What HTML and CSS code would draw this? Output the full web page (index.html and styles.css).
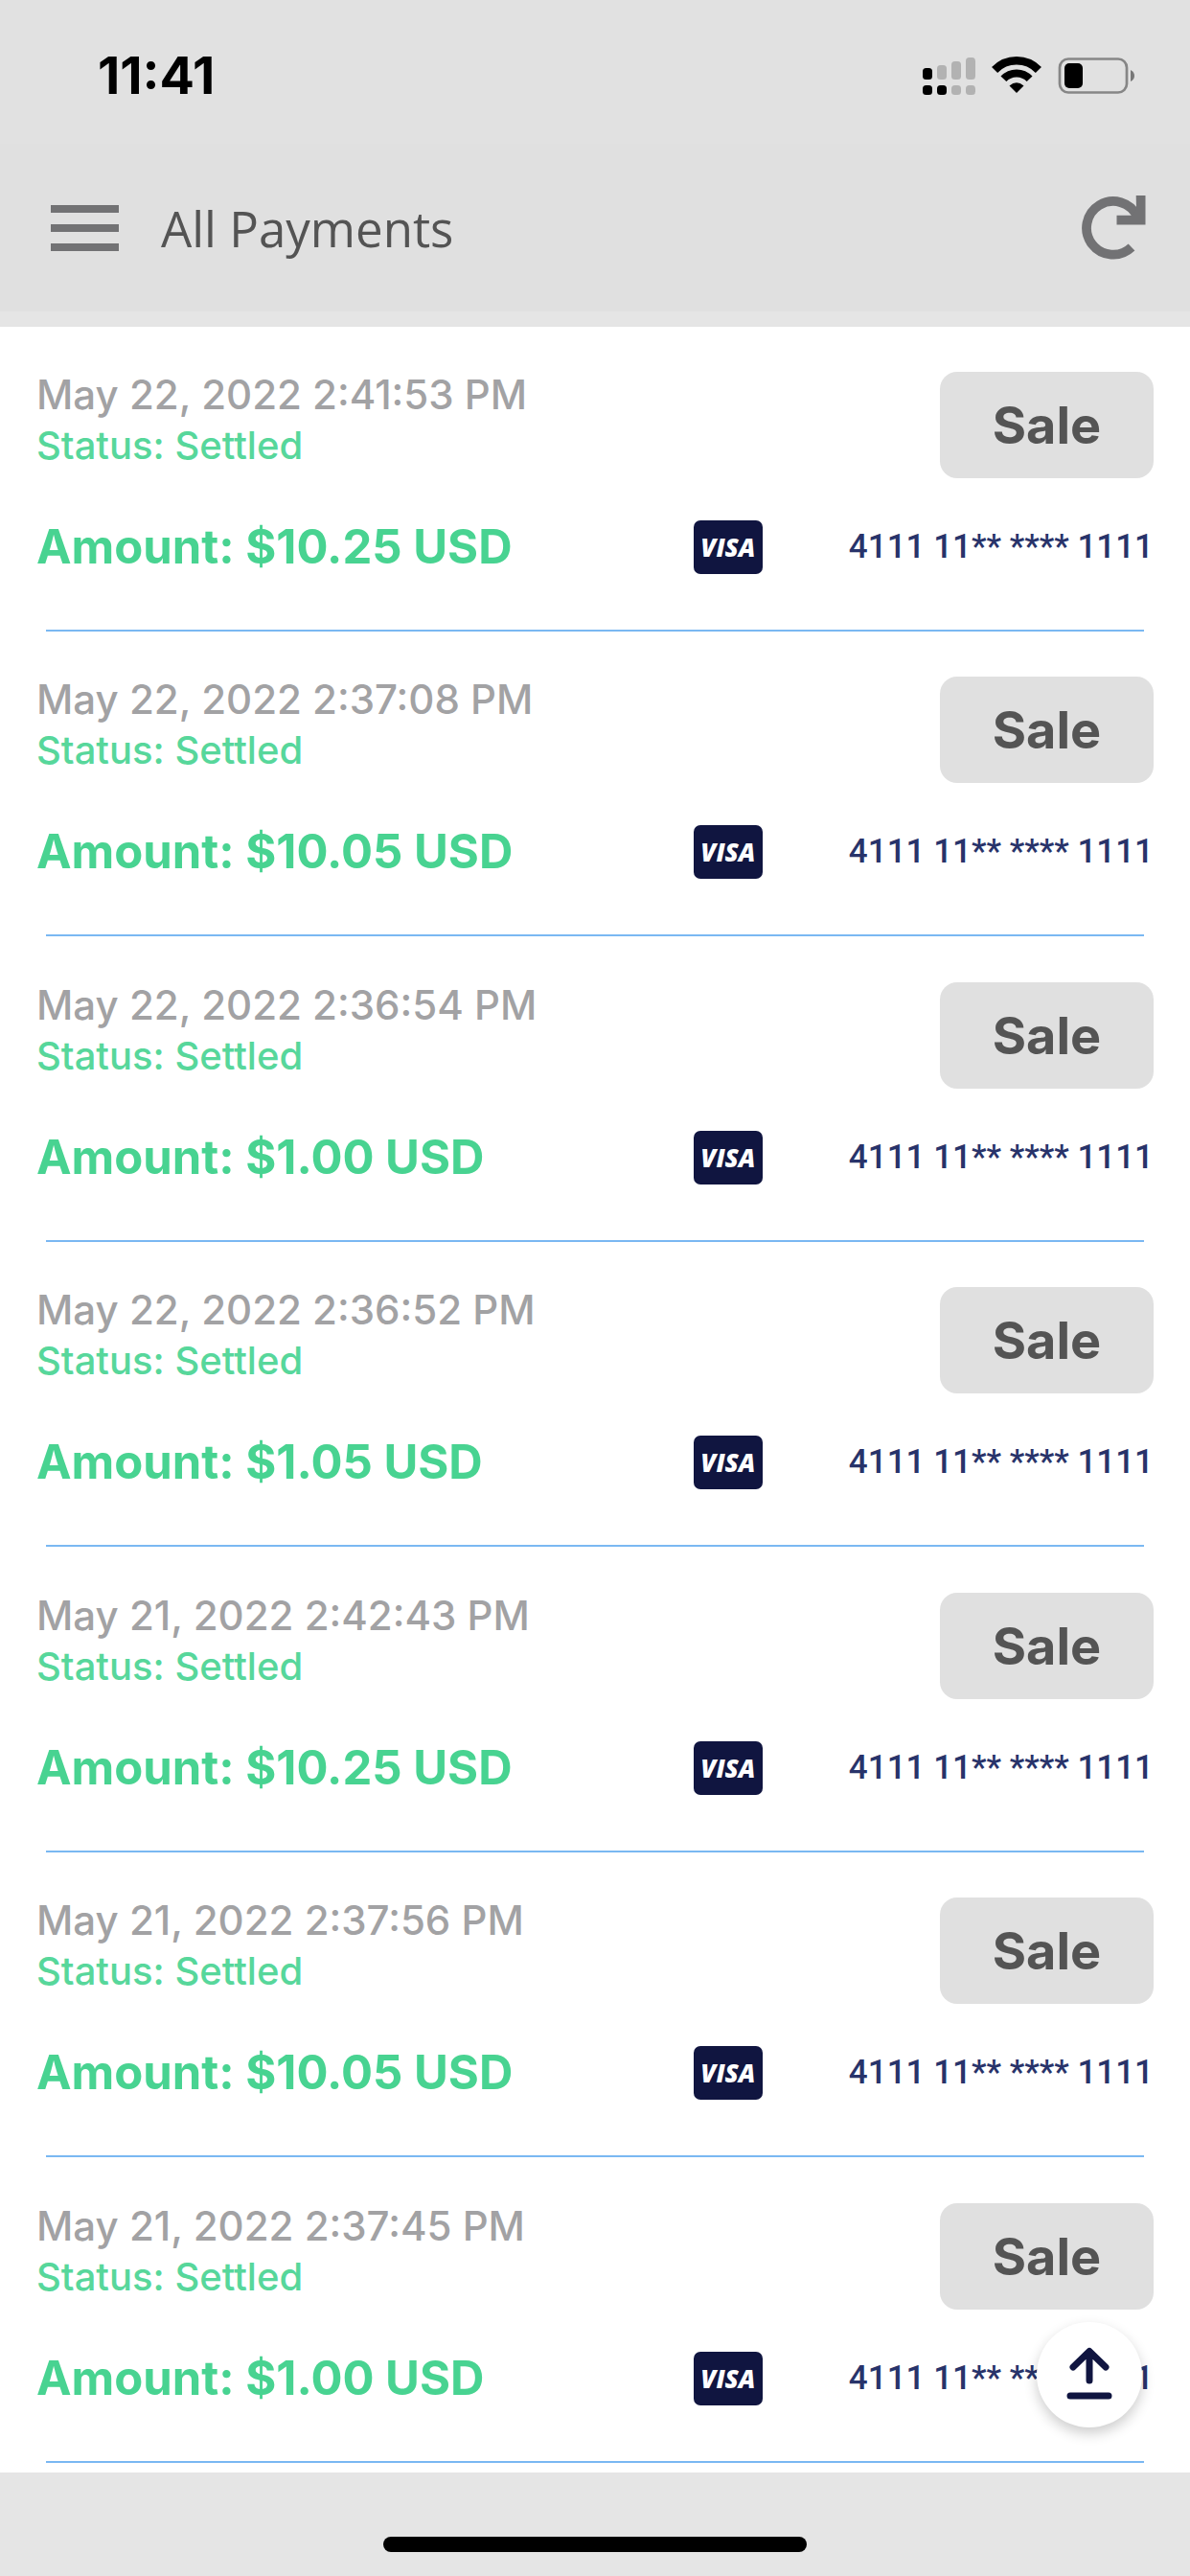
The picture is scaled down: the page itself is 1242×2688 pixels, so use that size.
FILE: index.html
```html
<!DOCTYPE html>
<html lang="en">
<head>
<meta charset="utf-8">
<meta name="viewport" content="width=device-width, initial-scale=1">
<title>All Payments</title>
<link rel="stylesheet" href="styles.css">
</head>
<body>
<div class="status-bar">
  <span class="clock">11:41</span>
  <svg class="status-icons" viewBox="0 0 224 42" width="224" height="42" aria-hidden="true">
    <g fill="#b2b2b2">
      <rect x="16" y="10" width="10" height="15" rx="3.5"/>
      <rect x="31" y="6" width="10" height="19" rx="3.5"/>
      <rect x="46" y="2" width="10" height="23" rx="3.5"/>
      <rect x="31" y="31" width="10" height="10" rx="3.5"/>
      <rect x="46" y="31" width="10" height="10" rx="3.5"/>
    </g>
    <rect x="1" y="13" width="10" height="12" rx="3.5"/>
    <rect x="1" y="31" width="10" height="10" rx="3.5"/>
    <rect x="16" y="31" width="10" height="10" rx="3.5"/>
    <g fill="none" stroke="#000">
      <path stroke-width="8.5" d="M76.1 15A31.8 31.8 0 0 1 121.9 15"/>
      <path stroke-width="8" d="M85.4 24.3A18.6 18.6 0 0 1 112.6 24.3"/>
    </g>
    <path d="M91.5 31.5Q99 25 106.5 31.5L99 39Z"/>
    <rect x="144" y="3.5" width="70" height="35" rx="9" fill="none" stroke="#868686" stroke-width="2.7"/>
    <rect x="149" y="8" width="19" height="26" rx="5"/>
    <path fill="#777" d="M218 15Q222 17 222 21T218 27Z"/>
  </svg>
</div>
<header class="header">
  <button class="icon-button" type="button" aria-label="Menu">
    <svg viewBox="0 0 71 48" width="71" height="48"><path fill="#727274" d="M0 0H71V8H0ZM0 20H71V28H0ZM0 40H71V48H0Z"/></svg>
  </button>
  <h1 class="title">All Payments</h1>
  <button class="icon-button" type="button" aria-label="Refresh">
    <svg viewBox="0 0 67 67" width="67" height="67">
      <path fill="none" stroke="#727274" stroke-width="9.8" d="M52 54A27.8 27.8 0 1 1 58 22"/>
      <path fill="#727274" d="M56.7 0H66.5V30.5H36.5V20.7H52L57 15Z"/>
    </svg>
  </button>
</header>
<main class="payments">
  <ul class="list">
    <li class="payment">
      <div class="top"><div><p class="date">May 22, 2022 2:41:53 PM</p><p class="state">Status: Settled</p></div><button class="sale" type="button">Sale</button></div>
      <div class="bottom"><p class="amount">Amount: $10.25 USD</p><span class="visa">VISA</span><span class="card">4111 11** **** 1111</span></div>
    </li>
    <li class="payment">
      <div class="top"><div><p class="date">May 22, 2022 2:37:08 PM</p><p class="state">Status: Settled</p></div><button class="sale" type="button">Sale</button></div>
      <div class="bottom"><p class="amount">Amount: $10.05 USD</p><span class="visa">VISA</span><span class="card">4111 11** **** 1111</span></div>
    </li>
    <li class="payment">
      <div class="top"><div><p class="date">May 22, 2022 2:36:54 PM</p><p class="state">Status: Settled</p></div><button class="sale" type="button">Sale</button></div>
      <div class="bottom"><p class="amount">Amount: $1.00 USD</p><span class="visa">VISA</span><span class="card">4111 11** **** 1111</span></div>
    </li>
    <li class="payment">
      <div class="top"><div><p class="date">May 22, 2022 2:36:52 PM</p><p class="state">Status: Settled</p></div><button class="sale" type="button">Sale</button></div>
      <div class="bottom"><p class="amount">Amount: $1.05 USD</p><span class="visa">VISA</span><span class="card">4111 11** **** 1111</span></div>
    </li>
    <li class="payment">
      <div class="top"><div><p class="date">May 21, 2022 2:42:43 PM</p><p class="state">Status: Settled</p></div><button class="sale" type="button">Sale</button></div>
      <div class="bottom"><p class="amount">Amount: $10.25 USD</p><span class="visa">VISA</span><span class="card">4111 11** **** 1111</span></div>
    </li>
    <li class="payment">
      <div class="top"><div><p class="date">May 21, 2022 2:37:56 PM</p><p class="state">Status: Settled</p></div><button class="sale" type="button">Sale</button></div>
      <div class="bottom"><p class="amount">Amount: $10.05 USD</p><span class="visa">VISA</span><span class="card">4111 11** **** 1111</span></div>
    </li>
    <li class="payment">
      <div class="top"><div><p class="date">May 21, 2022 2:37:45 PM</p><p class="state">Status: Settled</p></div><button class="sale" type="button">Sale</button></div>
      <div class="bottom"><p class="amount">Amount: $1.00 USD</p><span class="visa">VISA</span><span class="card">4111 11** **** 1111</span></div>
    </li>
  </ul>
  <button class="to-top" type="button" aria-label="Back to top">
    <svg viewBox="0 0 110 110" width="110" height="110"><path fill="none" stroke="#101540" stroke-width="7" stroke-linecap="round" stroke-linejoin="round" d="M55 61V31M38 47L55 30.5L72 47M35 77H75"/></svg>
  </button>
</main>
<footer class="home-area"><div class="home-indicator"></div></footer>
</body>
</html>
```
FILE: styles.css
```css
* {
  box-sizing: border-box;
}

body {
  margin: 0;
  min-height: 100vh;
  display: flex;
  flex-direction: column;
  background: #fff;
  font-family: Inter, "Liberation Sans", sans-serif;
}

p,
h1,
ul {
  margin: 0;
  padding: 0;
}

button {
  border: 0;
  padding: 0;
  font-family: inherit;
  cursor: pointer;
}

svg {
  display: block;
}

.status-bar {
  display: flex;
  align-items: center;
  justify-content: space-between;
  height: 150px;
  padding: 8px 56px 0 102px;
  background: #e1e1e1;
}

.clock {
  font-size: 54px;
  line-height: 54px;
  font-weight: 700;
  color: #000;
}

.header {
  display: flex;
  align-items: center;
  height: 191px;
  padding: 0 46px 0 53px;
  background: #e0e0e0;
  border-bottom: 16px solid #e5e5e5;
}

.icon-button {
  background: none;
}

.title {
  flex: 1;
  margin-left: 44px;
  font-family: "Open Sans", sans-serif;
  font-size: 51px;
  line-height: 60px;
  font-weight: 400;
  color: #545454;
}

.payments {
  position: relative;
  flex: 1;
  display: flex;
  flex-direction: column;
  padding-bottom: 10px;
}

.list {
  flex: 1;
  display: flex;
  flex-direction: column;
  list-style: none;
}

.payment {
  flex: 1;
  padding: 47px 38px 0;
}

.payment::after {
  content: "";
  display: block;
  height: 2px;
  margin: 58px 10px 0;
  background: #7ab8f2;
}

.top {
  display: flex;
  justify-content: space-between;
  align-items: flex-start;
}

.date {
  font-size: 42px;
  line-height: 48px;
  font-weight: 500;
  color: #a2a2a4;
}

.state {
  font-size: 40px;
  line-height: 58px;
  font-weight: 500;
  color: #57d79b;
}

.sale {
  width: 223px;
  height: 111px;
  border-radius: 18px;
  background: #e0e0e0;
  color: #545454;
  font-size: 54px;
  font-weight: 700;
}

.bottom {
  display: flex;
  align-items: center;
  margin-top: 44px;
}

.amount {
  flex: 1;
  font-size: 49px;
  line-height: 56px;
  font-weight: 700;
  color: #48d391;
}

.visa {
  width: 72px;
  height: 56px;
  margin-right: 90px;
  border-radius: 7px;
  background: #101540;
  color: #fff;
  font-family: "Open Sans", sans-serif;
  font-size: 26px;
  line-height: 56px;
  font-weight: 800;
  font-style: italic;
  text-align: center;
}

.card {
  font-family: Roboto, sans-serif;
  font-size: 35px;
  line-height: 56px;
  font-weight: 500;
  color: #28336a;
  white-space: nowrap;
}

.to-top {
  position: absolute;
  right: 50px;
  bottom: 47px;
  width: 110px;
  height: 110px;
  border-radius: 50%;
  background: #fff;
  box-shadow: 0 6px 14px rgba(0, 0, 0, 0.2);
}

.home-area {
  display: flex;
  justify-content: center;
  align-items: flex-end;
  height: 108px;
  padding-bottom: 25px;
  background: #e5e5e5;
}

.home-indicator {
  width: 442px;
  height: 16px;
  border-radius: 8px;
  background: #000;
}
```
